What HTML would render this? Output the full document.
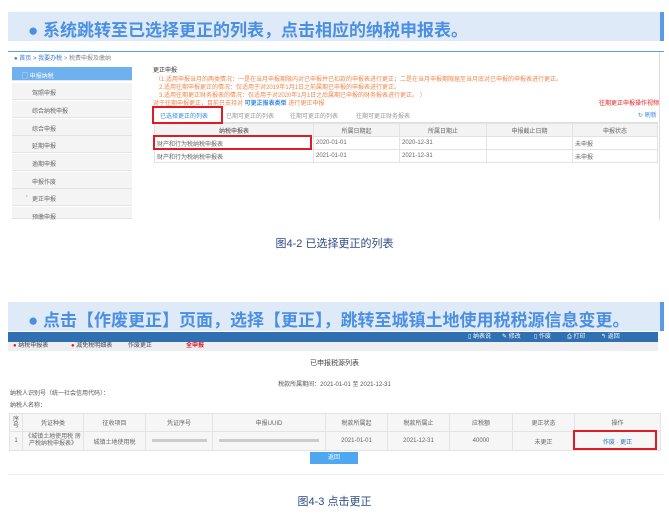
<!DOCTYPE html>
<html><head><meta charset="utf-8"><style>
*{margin:0;padding:0;box-sizing:border-box}
body{width:669px;height:531px;background:#fff;position:relative;overflow:hidden;font-family:"Liberation Sans","Noto Sans CJK SC",sans-serif;color:#555}
.a{position:absolute;white-space:nowrap}
.ban{position:absolute;left:8px;width:656px;height:29px;background:#dfeaf8;border-right:4px solid #5b9be6}
.ban span{position:absolute;left:20px;top:4px;font-size:17px;font-weight:bold;color:#4a8fe2}
.s{font-size:6px;line-height:7px}
.side{position:absolute;left:12px;width:120px;height:17px;background:#f4f4f4;border-bottom:1px solid #e4e4e4}
.side span{position:absolute;left:20px;top:5px;font-size:6px;color:#666}
table{border-collapse:collapse;position:absolute}
td{border:1px solid #e3e3e3;font-size:6px;color:#666;padding:0 2px;white-space:nowrap}
.cap{position:absolute;font-size:11px;color:#2d4b85;width:669px;text-align:center}
</style></head><body>

<div class="ban" style="top:12px"><span>● 系统跳转至已选择更正的列表，点击相应的纳税申报表。</span></div>

<div class="a" style="left:8px;top:51px;width:656px;height:1px;background:#5aa0e6"></div>
<div class="a s" style="left:14px;top:56px;color:#3a7ad0">● 首页 &gt; <span style="color:#3a7ad0">我要办税</span> <span style="color:#888">&gt; 税费申报及缴纳</span></div>

<div class="side" style="top:67px;background:#6fb0ee;height:14px"><span style="color:#fff;left:10px;top:4px">▢ 申报纳税</span></div>
<div class="side" style="top:83px"><span>驾照申报</span></div>
<div class="side" style="top:101px"><span>综合纳税申报</span></div>
<div class="side" style="top:119px"><span>综合申报</span></div>
<div class="side" style="top:136px"><span>延期申报</span></div>
<div class="side" style="top:154px"><span>逾期申报</span></div>
<div class="side" style="top:172px"><span>申报作废</span></div>
<div class="side" style="top:189px"><span><b style="color:#3a7ad0;position:absolute;left:-6px">·</b>更正申报</span></div>
<div class="side" style="top:207px;height:12px"><span>预缴申报</span></div>

<div class="a s" style="left:153px;top:68px;color:#333">更正申报</div>
<div class="a s" style="left:155px;top:77px;color:#f0854a">（1.适用申报当月的两类情况：一是在当月申报期限内对已申报并已扣款的申报表进行更正；二是在当月申报期限届至当月底对已申报的申报表进行更正。</div>
<div class="a s" style="left:159px;top:85px;color:#f0854a">2.适用往期申报更正的情况：仅适用于对2019年1月1日之前属期已申报的申报表进行更正。</div>
<div class="a s" style="left:159px;top:93px;color:#f0854a">3.适用往期更正财务报表的情况：仅适用于对2020年1月1日之后属期已申报的财务报表进行更正。 ）</div>
<div class="a s" style="left:153px;top:101px;color:#f0854a">对于往期申报更正，目前只支持对 <b style="color:#3a8ae0">可更正报表类型</b> 进行更正申报</div>
<div class="a s" style="left:599px;top:101px;color:#e52020">往期更正申报操作视频</div>

<div class="a" style="left:154px;top:110px;width:504px;height:13px;border-bottom:1px solid #ddd"></div>
<div class="a s" style="left:160px;top:114px;color:#3a8ae0">已选择更正的列表</div>
<div class="a" style="left:155px;top:122px;width:57px;height:1px;background:#3a8ae0"></div>
<div class="a s" style="left:226px;top:114px;color:#999">已期可更正的列表</div>
<div class="a s" style="left:290px;top:114px;color:#999">往期可更正的列表</div>
<div class="a s" style="left:356px;top:114px;color:#999">往期可更正财务报表</div>
<div class="a s" style="left:638px;top:113px;color:#3a8ae0">↻ 刷新</div>

<table style="left:154px;top:123px;width:504px">
<tr style="height:13px;background:#f3f3f3"><td style="width:159px;text-align:center;color:#444">纳税申报表</td><td style="width:86px;text-align:center">所属日期起</td><td style="width:87px;text-align:center">所属日期止</td><td style="width:86px;text-align:center">申报截止日期</td><td style="text-align:center">申报状态</td></tr>
<tr style="height:13px"><td>财产和行为税纳税申报表</td><td>2020-01-01</td><td>2020-12-31</td><td></td><td>未申报</td></tr>
<tr style="height:13px"><td>财产和行为税纳税申报表</td><td>2021-01-01</td><td>2021-12-31</td><td></td><td>未申报</td></tr>
</table>

<div class="a" style="left:152px;top:106px;width:71px;height:18px;border:2px solid #e01b24"></div>
<div class="a" style="left:153px;top:135px;width:159px;height:15px;border:2px solid #e01b24"></div>

<div class="a" style="left:659px;top:52px;width:1px;height:168px;background:#ddd"></div>
<div class="cap" style="top:235px">图4-2 已选择更正的列表</div>

<div class="ban" style="top:302px"><span>● 点击【作废更正】页面，选择【更正】，跳转至城镇土地使用税税源信息变更。</span></div>

<div class="a" style="left:8px;top:332px;width:650px;height:10px;background:#2f6fb2"></div>
<div class="a s" style="left:468px;top:334px;color:#fff">▯ 纳表说</div>
<div class="a s" style="left:502px;top:334px;color:#fff">✎ 修改</div>
<div class="a s" style="left:534px;top:334px;color:#fff">▯ 作废</div>
<div class="a s" style="left:567px;top:334px;color:#fff">⎙ 打印</div>
<div class="a s" style="left:601px;top:334px;color:#fff">↰ 返回</div>
<div class="a" style="left:8px;top:342px;width:650px;height:9px;background:#eceef1"></div>
<div class="a s" style="left:13px;top:343px;color:#444"><b style="color:#e01b24">●</b> 纳税申报表</div>
<div class="a s" style="left:71px;top:343px;color:#444"><b style="color:#e01b24">●</b> 减免税明细表</div>
<div class="a s" style="left:128px;top:343px;color:#444">作废更正</div>
<div class="a s" style="left:186px;top:343px;color:#e01b24;font-weight:bold">全申报</div>

<div class="a" style="left:0;top:358px;width:669px;text-align:center;font-size:7px;color:#444">已申报税源列表</div>
<div class="a" style="left:0;top:379px;width:669px;text-align:center;font-size:6px;color:#555">税款所属期间：2021-01-01 至 2021-12-31</div>
<div class="a s" style="left:10px;top:391px">纳税人识别号（统一社会信用代码）：</div>
<div class="a s" style="left:10px;top:403px">纳税人名称：</div>

<table style="left:9px;top:413px;width:652px">
<tr style="height:18px;background:#f6f6f6;text-align:center"><td style="width:13px;padding:0;line-height:6px">序<br>号</td><td style="width:61px">凭证种类</td><td style="width:62px">征收项目</td><td style="width:67px">凭证序号</td><td style="width:113px">申报UUID</td><td style="width:62px">税款所属起</td><td style="width:62px">税款所属止</td><td style="width:63px">应税额</td><td style="width:62px">更正状态</td><td>操作</td></tr>
<tr style="height:19px;background:#f6f6f6;text-align:center"><td>1</td><td style="line-height:7px">《城镇土地使用税 房<br>产税纳税申报表》</td><td>城镇土地使用税</td><td><span style="display:inline-block;width:55px;height:3px;background:#ccc"></span></td><td><span style="display:inline-block;width:100px;height:3px;background:#ccc"></span></td><td>2021-01-01</td><td>2021-12-31</td><td>40000</td><td>未更正</td><td style="color:#2a6fc0">作废 · 更正</td></tr>
</table>
<div class="a" style="left:573px;top:430px;width:84px;height:20px;border:2px solid #e01b24"></div>

<div class="a" style="left:310px;top:452px;width:48px;height:12px;background:#4da8f0;color:#fff;font-size:6px;text-align:center;line-height:12px">返回</div>
<div class="a" style="left:8px;top:474px;width:656px;height:1px;background:#eee"></div>
<div class="cap" style="top:493px">图4-3 点击更正</div>
</body></html>
